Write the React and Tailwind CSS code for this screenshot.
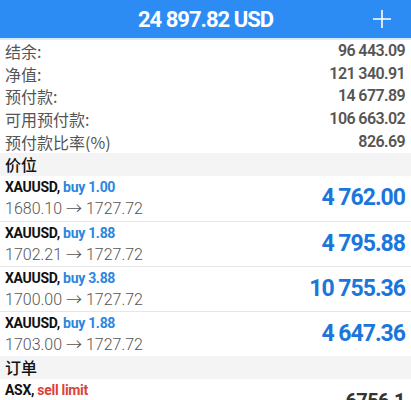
const summary = [
  ['结余:', '96 443.09'],
  ['净值:', '121 340.91'],
  ['预付款:', '14 677.89'],
  ['可用预付款:', '106 663.02'],
  ['预付款比率(%)', '826.69'],
];

const positions = [
  { lots: '1.00', open: '1680.10', now: '1727.72', profit: '4 762.00' },
  { lots: '1.88', open: '1702.21', now: '1727.72', profit: '4 795.88' },
  { lots: '3.88', open: '1700.00', now: '1727.72', profit: '10 755.36' },
  { lots: '1.88', open: '1703.00', now: '1727.72', profit: '4 647.36' },
];

const cjk = "font-['Noto_Sans_CJK_SC',sans-serif]";
const num = "font-['Roboto','Noto_Sans_CJK_SC',sans-serif]";

function SectionHeader({ children }) {
  return (
    <div className={`h-[23px] bg-[#f4f4f4] flex items-center px-[5px] text-[16px] font-medium text-[#111] ${cjk}`}>
      {children}
    </div>
  );
}

export default function App() {
  return (
    <div className="w-[411px] h-[400px] overflow-hidden bg-white">
      <div className="h-[38px] bg-[#2d8cf4] relative flex items-center justify-center">
        <span className={`text-white text-[22px] font-bold tracking-[-1px] ${num}`}>24 897.82 USD</span>
        <svg className="absolute right-[20px] top-[10px]" width="18" height="18" viewBox="0 0 18 18">
          <path d="M9 0v18M0 9h18" stroke="white" strokeWidth="1.6" />
        </svg>
      </div>
      <div className="h-[2px] bg-[#d4ebfc]" />

      <div className="flex flex-col">
        {summary.map(([label, value]) => (
          <div key={label} className="h-[22.6px] flex items-center justify-between pl-[5px] pr-[6px]">
            <span className={`text-[16px] text-[#555] ${cjk}`}>{label}</span>
            <span className={`text-[16px] font-semibold tracking-[-0.6px] text-[#555] ${num}`}>{value}</span>
          </div>
        ))}
      </div>

      <SectionHeader>价位</SectionHeader>
      {positions.map((p, i) => (
        <div key={i} className={`h-[45px] flex items-center justify-between pl-[5px] pr-[6px] ${i > 0 ? 'border-t border-[#e6e6e6]' : ''}`}>
          <div className="flex flex-col leading-[21px]">
            <span className={`text-[14px] font-bold tracking-[-0.3px] ${num}`}>
              <span className="text-[#111]">XAUUSD, </span>
              <span className="text-[#2a86e0]">buy {p.lots}</span>
            </span>
            <span className={`text-[16px] font-light text-[#555] ${num}`}>
              {p.open} → {p.now}
            </span>
          </div>
          <span className={`text-[23px] font-bold tracking-[-1px] text-[#1b76dc] ${num}`}>{p.profit}</span>
        </div>
      ))}

      <SectionHeader>订单</SectionHeader>
      <div className="h-[45px] flex items-center justify-between pl-[5px] pr-[6px]">
        <div className="flex flex-col leading-[21px] self-start pt-[1px]">
          <span className={`text-[14px] font-bold tracking-[-0.3px] ${num}`}>
            <span className="text-[#111]">ASX, </span>
            <span className="text-[#d9443a]">sell limit</span>
          </span>
        </div>
        <span className={`text-[20px] font-bold tracking-[-0.6px] text-[#333] ${num}`}>6756.1</span>
      </div>
    </div>
  );
}
